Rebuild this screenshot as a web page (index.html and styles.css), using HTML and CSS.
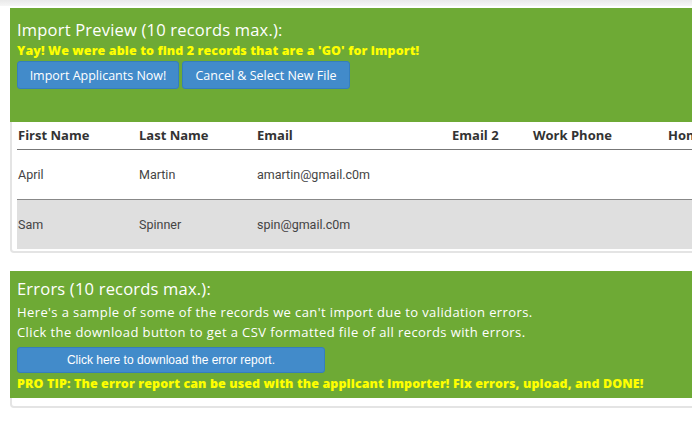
FILE: index.html
```html
<!DOCTYPE html>
<html lang="en">
  <head>
    <meta charset="UTF-8" />
    <meta name="viewport" content="width=device-width, initial-scale=1.0" />
    <title>Applicant Import</title>
    <link rel="stylesheet" href="styles.css">
  </head>
  <body>
    <div class="prev-edge"></div>

    <div class="card">
      <div class="card-head">
        <h3>Import Preview (10 records max.):</h3>
        <p class="notice">Yay! We were able to find 2 records that are a 'GO' for import!</p>
        <div class="actions">
          <button class="btn">Import Applicants Now!</button>
          <button class="btn">Cancel &amp; Select New File</button>
        </div>
      </div>
      <div class="card-body">
        <table class="preview">
          <thead>
            <tr>
              <th class="c1">First Name</th>
              <th class="c2">Last Name</th>
              <th class="c3">Email</th>
              <th class="c4">Email 2</th>
              <th class="c5">Work Phone</th>
              <th class="c6">Home Phone</th>
              <th class="c7">Mobile Phone</th>
            </tr>
          </thead>
          <tbody>
            <tr>
              <td>April</td>
              <td>Martin</td>
              <td>amartin@gmail.c0m</td>
              <td></td>
              <td></td>
              <td></td>
              <td></td>
            </tr>
            <tr class="alt">
              <td>Sam</td>
              <td>Spinner</td>
              <td>spin@gmail.c0m</td>
              <td></td>
              <td></td>
              <td></td>
              <td></td>
            </tr>
          </tbody>
        </table>
      </div>
    </div>

    <div class="card">
      <div class="card-head errors">
        <h3>Errors (10 records max.):</h3>
        <p class="info">Here's a sample of some of the records we can't import due to validation errors.</p>
        <p class="info">Click the download button to get a CSV formatted file of all records with errors.</p>
        <button class="btn btn-wide">Click here to download the error report.</button>
        <p class="notice">PRO TIP: The error report can be used with the applicant importer! Fix errors, upload, and DONE!</p>
      </div>
      <div class="card-body short"></div>
    </div>
  </body>
</html>
```

FILE: styles.css
```css
html,
body {
  margin: 0;
  overflow: hidden;
  background: #fff;
}
body {
  font-family: "Open Sans", "Noto Sans", sans-serif;
  width: 692px;
}
.prev-edge {
  height: 6px;
  background: linear-gradient(#e9e9e9, #f6f6f6);
  margin-bottom: 2px;
}
.card {
  width: 1000px;
  margin-left: 10px;
  border: 2px solid #e4e4e4;
  border-top: none;
  border-radius: 0 0 4px 4px;
  margin-bottom: 18px;
}
.card-head {
  background: #6eaa35;
  margin-left: -2px;
  padding: 9px 7px 33px 7px;
  color: #fff;
}
.card-head h3 {
  margin: 0;
  font-weight: 400;
  font-size: 16.5px;
  line-height: 26px;
  letter-spacing: 0.2px;
}
.notice {
  margin: 0;
  color: #ffff00;
  font-weight: 800;
  font-size: 12.5px;
  line-height: 16px;
  letter-spacing: 0.1px;
}
.actions {
  display: flex;
  gap: 3px;
  margin-top: 2px;
}
.btn {
  font-family: "Open Sans", "Noto Sans", sans-serif;
  background: #428bca;
  color: #fff;
  border: 1px solid #357ebd;
  border-radius: 3px;
  font-size: 12.5px;
  height: 28px;
  padding: 0 10px;
  cursor: pointer;
}
.actions .btn:first-child {
  width: 162px;
}
.actions .btn:last-child {
  width: 168px;
}
.card-body {
  padding: 0 0 2px 5px;
}
.card-body.short {
  height: 8px;
  padding: 0;
}
.preview {
  border-collapse: collapse;
  table-layout: fixed;
  width: 890px;
}
.preview th,
.preview td {
  box-sizing: border-box;
  padding: 0 0 0 1px;
  white-space: nowrap;
}
.preview th {
  text-align: left;
  font-weight: 700;
  font-size: 13px;
  color: #333;
  height: 27px;
  border-bottom: 1px solid #777;
}
.preview td {
  font-family: Roboto, "Liberation Sans", sans-serif;
  font-size: 12.5px;
  color: #444;
  height: 50px;
}
.preview tbody tr:first-child td {
  border-bottom: 1px solid #888;
}
.preview tr.alt td {
  background: #dfdfdf;
}
.c1 { width: 121px; }
.c2 { width: 118px; }
.c3 { width: 195px; }
.c4 { width: 81px; }
.c5 { width: 135px; }
.c6 { width: 120px; }
.c7 { width: 120px; }
.errors {
  padding-top: 5px;
  padding-bottom: 6px;
}
.info {
  margin: 0;
  font-size: 13px;
  line-height: 20px;
  letter-spacing: 0.4px;
}
.btn-wide {
  display: block;
  width: 308px;
  height: 26px;
  margin: 5px 0 3px;
  font-family: "Liberation Sans", Arial, sans-serif;
  font-size: 12px;
}
```
